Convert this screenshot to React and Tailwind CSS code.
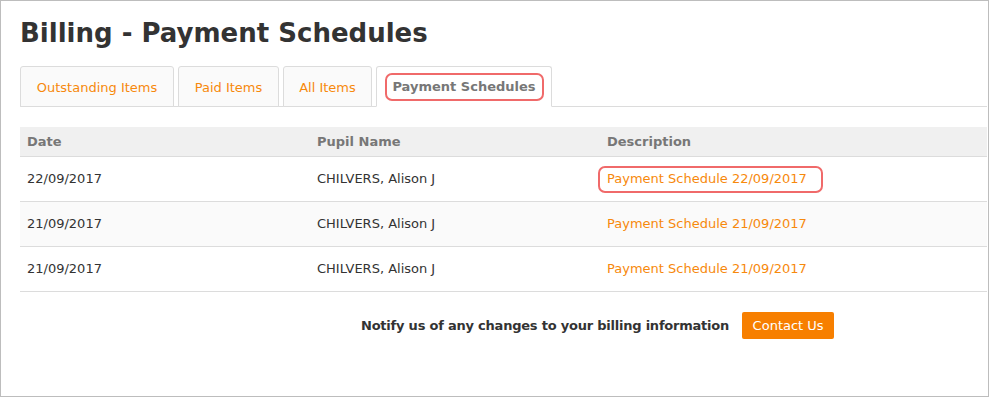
import React from 'react';

const tabs = [
  { label: 'Outstanding Items', w: 'w-[154px]' },
  { label: 'Paid Items', w: 'w-[101px]' },
  { label: 'All Items', w: 'w-[89px]' },
];

const rows = [
  { date: '22/09/2017', pupil: 'CHILVERS, Alison J', desc: 'Payment Schedule 22/09/2017', marked: true },
  { date: '21/09/2017', pupil: 'CHILVERS, Alison J', desc: 'Payment Schedule 21/09/2017' },
  { date: '21/09/2017', pupil: 'CHILVERS, Alison J', desc: 'Payment Schedule 21/09/2017' },
];

const App = () => {
  return (
    <div
      className="w-[989px] h-[397px] border border-[#bdbdbd] bg-white pl-[19px] pr-[1px] text-[13px] text-[#333]"
      style={{ fontFamily: '"DejaVu Sans", Verdana, sans-serif' }}
    >
      <h1 className="pt-[15px] text-[26px] font-bold leading-[34px] text-[#333]">Billing - Payment Schedules</h1>

      {/* tabs */}
      <div className="mt-[16px] flex items-end gap-[4px] border-b border-[#dcdcdc]">
        {tabs.map((t) => (
          <div
            key={t.label}
            className={`-mb-px h-[41px] ${t.w} pt-[2px] flex items-center justify-center rounded-t-[3px] border border-[#dcdcdc] bg-[#fafafa] text-[#f7890c]`}
          >
            {t.label}
          </div>
        ))}
        <div className="-mb-px h-[41px] w-[176px] pt-px flex items-center justify-center rounded-t-[3px] border border-b-white border-[#dcdcdc] bg-white">
          <span className="w-[159px] h-[28px] flex items-center justify-center rounded-[7px] border-2 border-[#f06a6a] font-bold text-[#777]">
            Payment Schedules
          </span>
        </div>
      </div>

      {/* table */}
      <div className="mt-[20px]">
        <div className="grid grid-cols-[290px_290px_1fr] h-[30px] items-center bg-[#f0f0f0] border-b border-[#dcdcdc] font-bold text-[#777]">
          <div className="pl-[7px]">Date</div>
          <div className="pl-[7px]">Pupil Name</div>
          <div className="pl-[7px]">Description</div>
        </div>
        {rows.map((r, i) => (
          <div
            key={i}
            className={`grid grid-cols-[290px_290px_1fr] h-[45px] items-center border-b border-[#dcdcdc] ${i === 1 ? 'bg-[#fafafa]' : 'bg-white'}`}
          >
            <div className="pl-[7px]">{r.date}</div>
            <div className="pl-[7px]">{r.pupil}</div>
            <div className="pl-[7px] text-[#f7890c]">
              {r.marked ? (
                <span className="-ml-[9px] w-[225px] h-[27px] pl-[7px] flex items-center rounded-[7px] border-2 border-[#f06a6a]">
                  {r.desc}
                </span>
              ) : (
                r.desc
              )}
            </div>
          </div>
        ))}
      </div>

      {/* footer */}
      <div className="mt-[20px] pl-[341px] flex items-center gap-[13px]">
        <span className="font-bold tracking-[-0.22px] text-[#333]">Notify us of any changes to your billing information</span>
        <button className="h-[27px] w-[92px] rounded-[2px] bg-[#f77f00] text-white">Contact Us</button>
      </div>
    </div>
  );
};

export default App;
